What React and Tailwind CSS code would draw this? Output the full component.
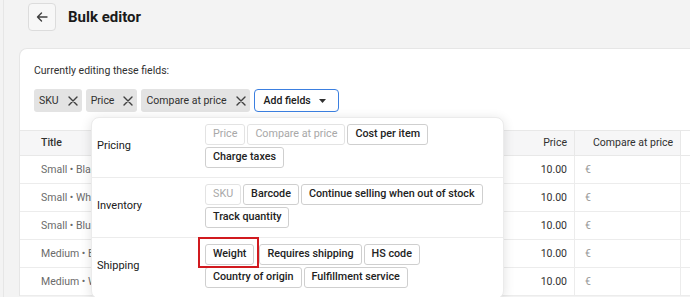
import React from 'react';

const rows = ['Small • Black', 'Small • White', 'Small • Blue', 'Medium • Black', 'Medium • White'];

const sections = [
    {
        label: 'Pricing',
        items: [
            { name: 'Price', disabled: true },
            { name: 'Compare at price', disabled: true },
            { name: 'Cost per item' },
            { name: 'Charge taxes' },
        ],
    },
    {
        label: 'Inventory',
        items: [
            { name: 'SKU', disabled: true },
            { name: 'Barcode' },
            { name: 'Continue selling when out of stock' },
            { name: 'Track quantity' },
        ],
    },
    {
        label: 'Shipping',
        items: [
            { name: 'Weight', marked: true },
            { name: 'Requires shipping' },
            { name: 'HS code' },
            { name: 'Country of origin' },
            { name: 'Fulfillment service' },
        ],
    },
];

const CloseIcon = () => (
    <svg width="10" height="10" viewBox="0 0 10 10" className="shrink-0">
        <path d="M1 1 L9 9 M9 1 L1 9" stroke="#404040" strokeWidth="1.4" strokeLinecap="round" />
    </svg>
);

const Chip = ({ label }) => (
    <div className="flex h-[23px] items-center gap-[9px] rounded-[3px] bg-[#e3e3e3] pl-[5px] pr-[4px] text-[10.5px] text-[#303030]">
        <span>{label}</span>
        <CloseIcon />
    </div>
);

const FieldButton = ({ name, disabled, marked }) => {
    const btn = (
        <div
            className={
                'flex h-[21px] items-center rounded-[3px] border bg-white px-[7px] text-[10.75px] whitespace-nowrap ' +
                (disabled
                    ? 'border-[#e3e3e3] text-[#a8a8a8]'
                    : 'border-[#cfcfcf] font-medium text-[#222222]')
            }
        >
            {name}
        </div>
    );
    if (!marked) return btn;
    return (
        <div className="relative mr-[3px]">
            {btn}
            {/* red annotation box */}
            <div className="absolute -top-[7px] -bottom-[3px] -left-[7px] -right-[5px] border-2 border-[#d11a1f]" />
        </div>
    );
};

export default function App() {
    return (
        <div
            className="h-[297px] w-[690px] overflow-hidden bg-[#f3f3f3]"
            style={{ fontFamily: 'Roboto, "Liberation Sans", sans-serif' }}
        >
            <div className="ml-[3px] h-full border-l border-[#e6e6e6]">
                {/* Header */}
                <div className="flex h-[48px] items-start pl-[24px] pt-[3px]">
                    <button className="flex h-[28px] w-[28px] items-center justify-center rounded-[4px] border border-[#dcdcdc] bg-[#f7f7f7]">
                        <svg width="12" height="12" viewBox="0 0 12 12">
                            <path d="M11 6 H1.5 M5.5 2 L1.5 6 L5.5 10" fill="none" stroke="#404040" strokeWidth="1.4" strokeLinecap="round" strokeLinejoin="round" />
                        </svg>
                    </button>
                    <h1 className="ml-[12px] mt-[5px] text-[15px] leading-[18px] font-bold text-[#1a1a1a]">Bulk editor</h1>
                </div>

                {/* Card */}
                <div className="relative ml-[15px] w-[681px] rounded-tl-lg border-t border-l border-[#e6e6e6] bg-white">
                    <div className="px-[14px] pt-[14px] pb-[18px]">
                        <p className="text-[10.5px] leading-[16px] text-[#303030]">Currently editing these fields:</p>
                        <div className="mt-[10px] flex items-center gap-[4px]">
                            <Chip label="SKU" />
                            <Chip label="Price" />
                            <Chip label="Compare at price" />
                            <button className="flex h-[23px] items-center gap-[8px] rounded-[4px] border-[1.5px] border-[#3b7fe0] bg-white pl-[9px] pr-[12px] text-[10.5px] font-medium text-[#202020]">
                                Add fields
                                <svg width="7" height="4" viewBox="0 0 7 4">
                                    <path d="M0 0 H7 L3.5 4 Z" fill="#303030" />
                                </svg>
                            </button>
                        </div>
                    </div>

                    {/* Table */}
                    <div className="text-[10.5px]">
                        <div className="flex h-[26px] border-y border-[#e8e8e8]">
                            <div className="flex flex-1 items-center bg-[#f6f6f7] pl-[21px] font-medium text-[#303030]">Title</div>
                            <div className="flex w-[100px] items-center justify-end bg-[#f6f6f7] pr-[7px] text-[#303030]">Price</div>
                            <div className="flex w-[106px] items-center border-l border-[#e8e8e8] bg-[#f6f6f7] pl-[18px] text-[#303030]">Compare at price</div>
                            <div className="flex-none w-[20px] border-l border-[#e8e8e8]" />
                        </div>
                        {rows.map((r) => (
                            <div key={r} className="flex h-[28px] border-b border-[#ececec]">
                                <div className="flex flex-1 items-center pl-[21px] text-[#6b6b6b]">{r}</div>
                                <div className="flex w-[100px] items-center justify-end pr-[7px] text-[#303030]">10.00</div>
                                <div className="flex w-[106px] items-center border-l border-[#ececec] pl-[10px] text-[#9a9a9a]">€</div>
                                <div className="flex-none w-[20px] border-l border-[#ececec]" />
                            </div>
                        ))}
                    </div>

                    {/* Add fields popover */}
                    <div className="absolute left-[71px] top-[68px] w-[413px] overflow-hidden rounded-lg border border-[#ebebeb] bg-white shadow-[0_2px_12px_rgba(0,0,0,0.12)]">
                        {sections.map((s) => (
                            <div key={s.label} className="grid grid-cols-[113px_1fr] border-b border-[#ececec] pt-[6px] pb-[9px]">
                                <div className="flex items-center pl-[5px] text-[11px] text-[#202020]">{s.label}</div>
                                <div className="flex flex-wrap gap-[2px]">
                                    {s.items.map((it) => (
                                        <FieldButton key={it.name} {...it} />
                                    ))}
                                </div>
                            </div>
                        ))}
                    </div>
                </div>
            </div>
        </div>
    );
}
